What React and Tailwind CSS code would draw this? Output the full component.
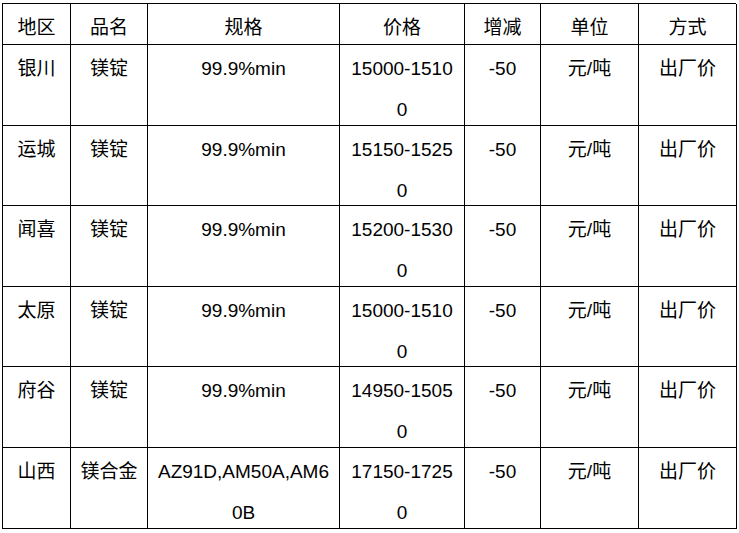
import React from "react";

const headers = ["地区", "品名", "规格", "价格", "增减", "单位", "方式"];

const rows = [
  ["银川", "镁锭", "99.9%min", "15000-15100", "-50", "元/吨", "出厂价"],
  ["运城", "镁锭", "99.9%min", "15150-15250", "-50", "元/吨", "出厂价"],
  ["闻喜", "镁锭", "99.9%min", "15200-15300", "-50", "元/吨", "出厂价"],
  ["太原", "镁锭", "99.9%min", "15000-15100", "-50", "元/吨", "出厂价"],
  ["府谷", "镁锭", "99.9%min", "14950-15050", "-50", "元/吨", "出厂价"],
  ["山西", "镁合金", "AZ91D,AM50A,AM60B", "17150-17250", "-50", "元/吨", "出厂价"],
];

const App = () => {
  return (
    <div className="w-[739px] h-[533px] bg-white overflow-hidden">
      <div
        className="ml-[2px] mt-[3px] w-[734px] grid grid-cols-[68px_77px_192px_125px_76px_98px_98px] grid-rows-[41px_81px_80px_81px_80px_81px_81px] border-l border-t border-black text-black text-[19px]"
        style={{ fontFamily: '"Liberation Sans", "Noto Sans CJK SC", sans-serif' }}
      >
        {headers.map((h) => (
          <div
            key={h}
            className="border-r border-b border-black overflow-hidden text-center leading-[41px] pt-[3px] px-2 break-all"
          >
            {h}
          </div>
        ))}
        {rows.map((row, i) =>
          row.map((cell, j) => (
            <div
              key={i + "-" + j}
              className="border-r border-b border-black overflow-hidden text-center leading-[41px] pt-[3px] px-2 break-all"
            >
              {cell}
            </div>
          ))
        )}
      </div>
    </div>
  );
};

export default App;
